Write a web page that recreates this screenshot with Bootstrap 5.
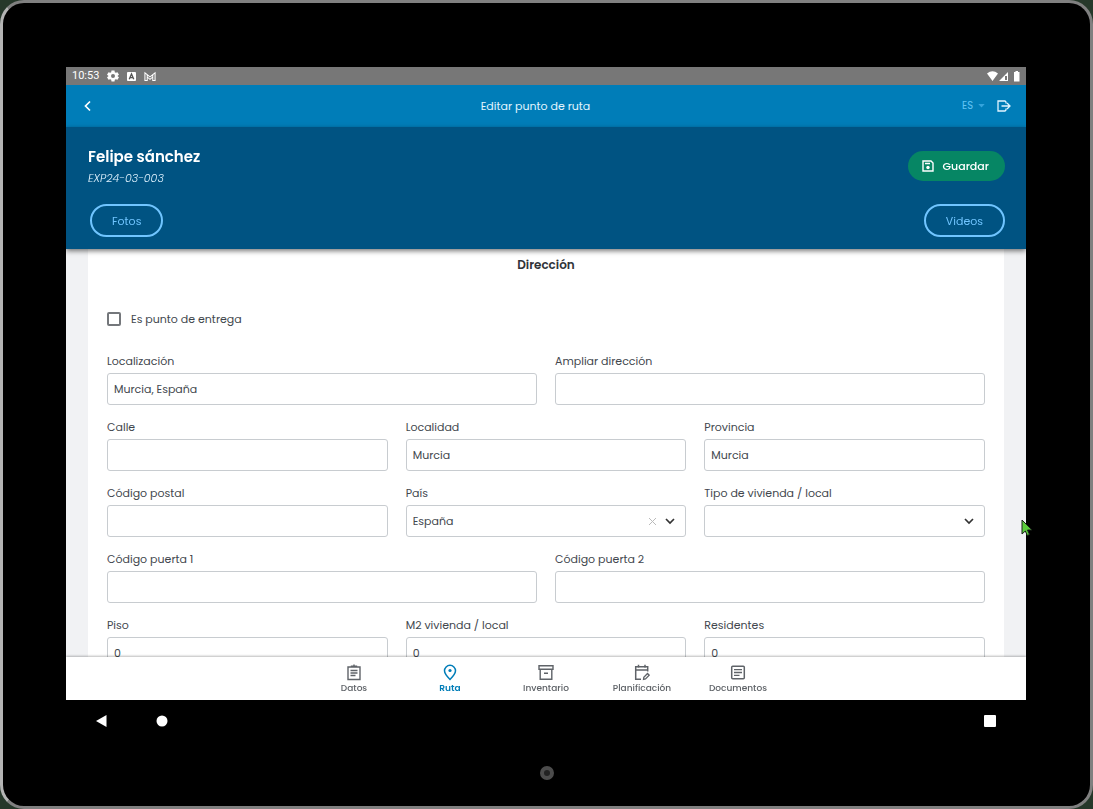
<!DOCTYPE html>
<html lang="es">
<head>
<meta charset="utf-8">
<meta name="viewport" content="width=device-width, initial-scale=1">
<title>Editar punto de ruta</title>
<link href="https://cdn.jsdelivr.net/npm/bootstrap@5.3.0/dist/css/bootstrap.min.css" rel="stylesheet">
<style>
  body { background: #26382a; font-family: Poppins, Inter, "Open Sans", sans-serif; font-size: 11px; line-height: 16px; color: #42474e; }
  button { font-family: inherit; }
  svg { display: block; fill: none; flex-shrink: 0; }
  .tablet { height: 100vh; background: #000; border: 3px solid #808080; border-left-color: #b4b4b4; border-radius: 24px; padding: 64px 64px 0 63px; }
  .tablet-screen { min-height: 0; }
  .status-bar { height: 18px; background: #777; color: #fff; font-family: Roboto, sans-serif; padding: 0 4px 0 6px; }
  .app-bar { height: 42px; background: #007db8; color: #e2f5ff; padding: 0 15px; }
  .bare-btn { background: none; border: 0; padding: 0; color: #fff; }
  .back-btn { width: 28px; }
  .lang-select { appearance: none; background: none; border: 0; padding: 0; width: 16px; font-size: 10px; color: #62c4f5; }
  .record-head { height: 122px; background: #005382; padding: 21px 21px 12px 22px; box-shadow: 0 2px 5px #0008; z-index: 2; }
  .record-name { font-size: 15px; line-height: 18px; font-weight: 600; color: #fff; margin: 0; }
  .record-code { line-height: 16px; font-style: italic; font-weight: 300; color: #e0f3ff; margin-top: 4px; }
  .btn-save { height: 30px; margin-top: 3px; padding: 0 16px 0 14px; gap: 9px; background: #068664; color: #fff; font-size: 11px; font-weight: 500; border: 0; }
  .btn-save:hover { background: #05755a; color: #fff; }
  .media-actions { padding-left: 2px; }
  .btn-outline-sky { height: 33px; padding: 0 20px; border: 2px solid #70c5ff; color: #70c5ff; font-size: 11px; line-height: 16px; }
  .btn-outline-sky:hover { border-color: #fff; color: #fff; }
  .scroll-pane { background: #f1f2f4; padding: 0 22px; flex: 1 1 0; min-height: 0; overflow-y: auto; scrollbar-width: none; }
  .scroll-pane::-webkit-scrollbar { display: none; }
  .form-sheet { background: #fff; padding: 8px 19px 20px; }
  .form-sheet h2 { font-size: 12px; line-height: 16px; font-weight: 600; color: #303338; margin: 0 0 38px; }
  .form-sheet .row { --bs-gutter-x: 18px; --bs-gutter-y: 15px; }
  .form-sheet .form-label { display: block; margin: 0 0 4px; font-size: 11px; line-height: 15px; }
  .form-sheet .form-control, .form-sheet .form-select { height: 32px; padding: 0 6px; border: 1px solid #c8ccd0; border-radius: 3px; font-size: 11px; line-height: 16px; color: #42474e; background: #fff; }
  .form-sheet .form-check-input { width: 14px; height: 14px; margin: 0; border: 2px solid #74777b; border-radius: 2px; }
  .check-line { gap: 10px; margin-bottom: 27px; }
  .select-icons { top: 0; right: 10px; height: 32px; gap: 7px; pointer-events: none; }
  .select-icons button { pointer-events: auto; }
  .tab-bar { height: 43px; background: #fff; box-shadow: 0 -1px 2px #0004; z-index: 2; }
  .tab-link { width: 96px; padding-top: 7px; font-size: 9px; line-height: 12px; font-weight: 500; color: #5f6368; text-decoration: none; }
  .tab-link.active { color: #007db8; font-weight: 600; }
  .tab-link svg { margin-bottom: 1px; }
  .system-bar { height: 42px; padding: 0 29px; gap: 47px; }
  .bezel-foot { height: 64px; padding-top: 24px; padding-left: 1px; }
  .home-dot { width: 14px; height: 14px; border: 4px solid #4c4c4c; background: #222; border-radius: 50%; }
  .pointer { right: -7px; top: 452px; z-index: 3; }
</style>
</head>
<body>
<div class="tablet d-flex flex-column">
  <div class="tablet-screen d-flex flex-column flex-grow-1 position-relative">
    <div class="status-bar flex-shrink-0 d-flex align-items-center justify-content-between">
      <div class="d-flex align-items-center">
        <span class="me-2">10:53</span>
        <svg class="me-2" width="12" height="12" viewBox="0 0 24 24"><path fill="#fff" fill-rule="evenodd" d="M9 1h6l.6 3.4 2 1.2L21 4.3l3 5.200-2.700 2.200v.600L24 14.500l-3 5.200-3.400-1.300-2 1.200L15 23H9l-.6-3.400-2-1.200L3 19.700l-3-5.200 2.700-2.200v-.6L0 9.500l3-5.200 3.400 1.300 2-1.200zM12 8a4 4 0 1 0 0 8 4 4 0 0 0 0-8z"/></svg>
        <svg class="me-2" width="9" height="9" viewBox="0 0 10 10"><rect x="0" y="0" width="10" height="10" rx="1" fill="#fff"/><path d="M2.500 8 5 2.200 7.500 8M3.600 6.200h2.800" stroke="#555" stroke-width="1.500"/></svg>
        <svg width="12" height="11" viewBox="0 0 13 11"><path d="M1 9.800V1.500L6.500 6 12 1.500v8.300H9.500V6L6.500 8.500 3.500 6v3.800zM3.500 6V3M9.500 6V3" stroke="#fff" stroke-width="1.100"/></svg>
      </div>
      <svg width="36" height="12" viewBox="0 0 36 12"><path fill="#fff" d="M1 3.500Q6.500-1 12 3.500L6.500 11zM13 11 22 2v9zM28 2h1.500V1h2.500v1h1.500v9.500H28z"/><path fill="#777" d="M19 6h2v4h-2z"/></svg>
    </div>

    <header class="app-bar flex-shrink-0 d-flex align-items-center">
      <button class="bare-btn back-btn" aria-label="Volver"><svg width="14" height="14" viewBox="0 0 14 14"><path d="M9 2.500 4.500 7 9 11.500" stroke="#fff" stroke-width="1.700"/></svg></button>
      <div class="flex-grow-1 text-center">Editar punto de ruta</div>
      <div class="d-flex align-items-center">
        <select class="lang-select" aria-label="Idioma"><option>ES</option></select>
        <svg width="7" height="4" viewBox="0 0 8 5"><path d="M0 0h8L4 4.500z" fill="#35a4dc"/></svg>
        <button class="bare-btn ms-2 ps-1" aria-label="Salir"><svg width="14" height="12" viewBox="0 0 14 12"><path d="M9 3.500V2L8 1H1v10h7l1-1V8.500M4.500 6h8M10 3l3 3-3 3" stroke="#e2f5ff" stroke-width="1.300"/></svg></button>
      </div>
    </header>

    <section class="record-head flex-shrink-0 d-flex flex-column justify-content-between position-relative">
      <div class="d-flex justify-content-between align-items-start">
        <div>
          <h1 class="record-name">Felipe sánchez</h1>
          <div class="record-code">EXP24-03-003</div>
        </div>
        <button class="btn btn-save rounded-pill d-flex align-items-center"><svg width="12" height="12" viewBox="0 0 12 12"><path d="M1 1h8l2 2v8H1zM3 3.500h5" stroke="#fff" stroke-width="1.400"/><circle cx="6" cy="7.500" r="1.700" fill="#fff"/></svg>Guardar</button>
      </div>
      <div class="media-actions d-flex justify-content-between">
        <button class="btn btn-outline-sky rounded-pill">Fotos</button>
        <button class="btn btn-outline-sky rounded-pill">Videos</button>
      </div>
    </section>

    <main class="scroll-pane">
      <form class="form-sheet">
        <h2 class="text-center">Dirección</h2>
        <div class="check-line d-flex align-items-center">
          <input class="form-check-input" type="checkbox" id="entrega">
          <label for="entrega">Es punto de entrega</label>
        </div>
        <div class="row">
          <div class="col-6"><label class="form-label" for="loc">Localización</label><input class="form-control" id="loc" value="Murcia, España"></div>
          <div class="col-6"><label class="form-label" for="amp">Ampliar dirección</label><input class="form-control" id="amp"></div>
          <div class="col-4"><label class="form-label" for="calle">Calle</label><input class="form-control" id="calle"></div>
          <div class="col-4"><label class="form-label" for="localidad">Localidad</label><input class="form-control" id="localidad" value="Murcia"></div>
          <div class="col-4"><label class="form-label" for="prov">Provincia</label><input class="form-control" id="prov" value="Murcia"></div>
          <div class="col-4"><label class="form-label" for="cp">Código postal</label><input class="form-control" id="cp"></div>
          <div class="col-4"><label class="form-label" for="pais">País</label>
            <div class="position-relative">
              <select class="form-select" id="pais"><option>España</option></select>
              <div class="select-icons position-absolute d-flex align-items-center">
                <button type="button" class="bare-btn" aria-label="Borrar país"><svg width="9" height="9" viewBox="0 0 9 9"><path d="m1 1 7 7M8 1 1 8" stroke="#bbb"/></svg></button>
                <svg width="12" height="8" viewBox="0 0 12 8"><path d="m2 2 4 4 4-4" stroke="#333" stroke-width="1.700"/></svg>
              </div>
            </div>
          </div>
          <div class="col-4"><label class="form-label" for="tipo">Tipo de vivienda / local</label>
            <div class="position-relative">
              <select class="form-select" id="tipo"><option></option></select>
              <div class="select-icons position-absolute d-flex align-items-center">
                <svg width="12" height="8" viewBox="0 0 12 8"><path d="m2 2 4 4 4-4" stroke="#333" stroke-width="1.700"/></svg>
              </div>
            </div>
          </div>
          <div class="col-6"><label class="form-label" for="p1">Código puerta 1</label><input class="form-control" id="p1"></div>
          <div class="col-6"><label class="form-label" for="p2">Código puerta 2</label><input class="form-control" id="p2"></div>
          <div class="col-4"><label class="form-label" for="piso">Piso</label><input class="form-control" id="piso" value="0"></div>
          <div class="col-4"><label class="form-label" for="m2">M2 vivienda / local</label><input class="form-control" id="m2" value="0"></div>
          <div class="col-4"><label class="form-label" for="res">Residentes</label><input class="form-control" id="res" value="0"></div>
        </div>
      </form>
    </main>

    <nav class="tab-bar flex-shrink-0 d-flex justify-content-center position-relative">
      <a class="tab-link d-flex flex-column align-items-center" href="#datos"><svg width="16" height="17" viewBox="0 0 16 17"><path d="M2 3h12v12.500H2zM5.500 3.500V2.200h5v1.300M8 .5v2M4.500 6.500h7M4.500 9h7M4.500 11.500h5" stroke="#5f6368" stroke-width="1.400"/></svg>Datos</a>
      <a class="tab-link active d-flex flex-column align-items-center" href="#ruta"><svg width="16" height="17" viewBox="0 0 16 17"><path d="M8 15.500C4.500 12 2.500 9.500 2.500 6.800a5.500 5.500 0 0 1 11 0C13.500 9.500 11.500 12 8 15.500z" stroke="#007db8" stroke-width="1.500"/><circle cx="8" cy="6.500" r="1.600" fill="#007db8"/></svg>Ruta</a>
      <a class="tab-link d-flex flex-column align-items-center" href="#inventario"><svg width="16" height="17" viewBox="0 0 16 17"><path d="M1 1.700h14v3.600H1zM2.200 5.500v9.800h11.600V5.500M6 9.300h4" stroke="#5f6368" stroke-width="1.400"/></svg>Inventario</a>
      <a class="tab-link d-flex flex-column align-items-center" href="#planificacion"><svg width="16" height="17" viewBox="0 0 16 17"><path d="M7 15.300H1.700V2.700h12v4.800M1.700 6h12M4.500.7v3M11 .7v3" stroke="#5f6368" stroke-width="1.500"/><path d="m9.500 15.500.3-2.200L13.500 9.500l1.700 1.700-3.700 3.800z" stroke="#5f6368" stroke-width="1.300"/></svg>Planificación</a>
      <a class="tab-link d-flex flex-column align-items-center" href="#documentos"><svg width="16" height="17" viewBox="0 0 16 17"><rect x="1.700" y="2.200" width="12.600" height="12.600" rx="1" stroke="#5f6368" stroke-width="1.500"/><path d="M4 5.700h8M4 8.500h8M4 11.300h5.500" stroke="#5f6368" stroke-width="1.300"/></svg>Documentos</a>
    </nav>

    <div class="system-bar flex-shrink-0 d-flex align-items-center">
      <button class="bare-btn" aria-label="Atrás"><svg width="12" height="14" viewBox="0 0 12 14"><path d="M1 7 11.500 1v12z" fill="#fff"/></svg></button>
      <button class="bare-btn" aria-label="Inicio"><svg width="14" height="14" viewBox="0 0 14 14"><circle cx="8" cy="7" r="5.500" fill="#fff"/></svg></button>
      <button class="bare-btn ms-auto" aria-label="Recientes"><svg width="14" height="14" viewBox="0 0 14 14"><rect x="1" y="1" width="12" height="12" rx="1" fill="#fff"/></svg></button>
    </div>
    <svg class="pointer position-absolute" width="12" height="18" viewBox="0 0 12 18"><path d="M1 1v14l3.300-3 2 4.500 2.200-1-2-4.500H11z" fill="#5bcb3c" stroke="#182018"/></svg>
  </div>
  <div class="bezel-foot flex-shrink-0 d-flex justify-content-center"><div class="home-dot"></div></div>
</div>
<script src="https://cdn.jsdelivr.net/npm/bootstrap@5.3.0/dist/js/bootstrap.bundle.min.js"></script>
</body>
</html>
